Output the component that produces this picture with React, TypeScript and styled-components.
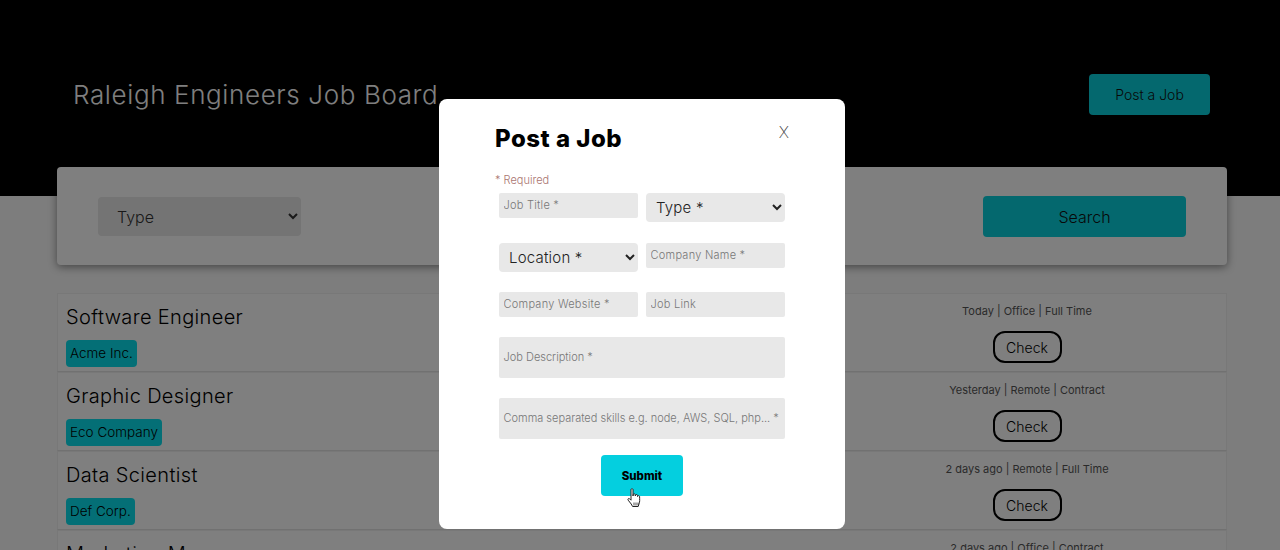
import React from "react";
import styled, { createGlobalStyle } from "styled-components";

const GlobalStyle = createGlobalStyle`
  html, body {
    margin: 0;
    height: 100%;
    overflow: hidden;
    background: #fafafa;
    font-family: "Inter", "Noto Sans", sans-serif;
  }
  * { box-sizing: border-box; }
`;

const Header = styled.header`
  height: 196px;
  background: #000;
  display: flex;
  justify-content: space-between;
  align-items: flex-start;
  padding: 74px 70px 0 73px;
`;

const BoardTitle = styled.h1`
  margin: 0;
  font-size: 26px;
  line-height: 41px;
  font-weight: 300;
  letter-spacing: 0.62px;
  color: #fff;
`;

const PostButton = styled.button`
  width: 121px;
  height: 41px;
  border: 0;
  border-radius: 4px;
  background: #08d0dc;
  color: #111;
  font: 300 14px "Inter", sans-serif;
`;

const Main = styled.main`
  padding: 0 53px 0 57px;
`;

const FilterCard = styled.section`
  height: 98px;
  margin-top: -29px;
  padding: 29px 41px 0;
  display: flex;
  justify-content: space-between;
  background: #fff;
  border-radius: 4px;
  box-shadow: 0 2px 8px rgba(0, 0, 0, 0.45);
`;

const FilterSelect = styled.select`
  width: 203px;
  height: 39px;
  margin-top: 1px;
  padding-left: 15px;
  border: 0;
  border-radius: 4px;
  background: #e8e8e8;
  color: #333;
  font: 300 16px "Inter", sans-serif;
`;

const SearchButton = styled.button`
  width: 203px;
  height: 41px;
  border: 0;
  border-radius: 4px;
  background: #08d0dc;
  color: #111;
  font: 300 16px "Inter", sans-serif;
`;

const JobList = styled.ul`
  list-style: none;
  margin: 28px 0 0;
  padding: 0;
`;

const JobRow = styled.li`
  height: 79px;
  display: flex;
  justify-content: space-between;
  padding: 8px 0 0 8px;
  border: 1px solid #f0f0f0;
  border-bottom-color: #e2e2e2;
  background: #fff;
`;

const JobInfo = styled.div`
  display: flex;
  flex-direction: column;
  align-items: flex-start;
`;

const JobName = styled.h2`
  margin: 0;
  font-size: 20px;
  line-height: 30px;
  font-weight: 300;
  letter-spacing: 0.35px;
  color: #000;
`;

const CompanyTag = styled.span`
  margin-top: 8px;
  height: 27px;
  padding: 0 4px 1px;
  display: flex;
  align-items: center;
  border-radius: 4px;
  background: #08dfec;
  color: #000;
  font-size: 13.5px;
  font-weight: 300;
`;

const JobAside = styled.div`
  width: 398px;
  display: flex;
  flex-direction: column;
  align-items: center;
`;

const JobMeta = styled.p`
  margin: 0;
  height: 21px;
  padding-top: 1px;
  font-size: 11px;
  line-height: 16px;
  color: #555;
`;

const CheckButton = styled.button`
  margin-top: 8px;
  width: 69px;
  height: 32px;
  border: 2px solid #000;
  border-radius: 12px;
  background: transparent;
  color: #000;
  font: 300 14px "Inter", sans-serif;
`;

const Overlay = styled.div`
  position: fixed;
  inset: 0;
  background: rgba(0, 0, 0, 0.5);
`;

const Modal = styled.form`
  position: absolute;
  left: 439px;
  top: 99px;
  width: 406px;
  height: 430px;
  padding: 22px 60px 0;
  background: #fff;
  border-radius: 8px;
`;

const ModalHead = styled.div`
  display: flex;
  justify-content: space-between;
  align-items: flex-start;
`;

const ModalTitle = styled.h2`
  margin: 0 0 0 -4px;
  font-size: 24px;
  line-height: 36px;
  font-weight: 800;
  letter-spacing: 0.5px;
  color: #000;
`;

const CloseMark = styled.span`
  margin: 1px -4px 0 0;
  font-size: 16px;
  line-height: 20px;
  font-weight: 200;
  color: #444;
`;

const RequiredNote = styled.p`
  margin: 16px 0 5px -4px;
  font-size: 11px;
  line-height: 15px;
  font-weight: 300;
  color: #a9746f;
`;

const FieldGrid = styled.div`
  display: grid;
  grid-template-columns: 139px 139px;
  grid-template-rows: 49.5px 49.5px 45px 61px 57px;
  column-gap: 8px;
`;

const FieldCell = styled.div<{ $wide?: boolean }>`
  grid-column: ${(p) => (p.$wide ? "1 / 3" : "auto")};
`;

const TextField = styled.input`
  display: block;
  width: 100%;
  height: 25px;
  padding: 0 4.5px 1px;
  border: 0;
  border-radius: 2px;
  background: #e8e8e8;
  font: 300 11px "Inter", sans-serif;
  letter-spacing: 0.25px;
  &::placeholder { color: #777; opacity: 1; }
`;

const ChoiceField = styled.select`
  display: block;
  width: 100%;
  height: 29px;
  padding-left: 6px;
  border: 0;
  border-radius: 4px;
  background: #e8e8e8;
  color: #222;
  font: 300 15px "Inter", sans-serif;
  letter-spacing: 0.2px;
`;

const AreaField = styled.textarea`
  display: block;
  width: 100%;
  height: 41px;
  padding: 13px 4.5px 0;
  border: 0;
  border-radius: 2px;
  background: #e8e8e8;
  resize: none;
  font: 300 11px "Inter", sans-serif;
  &::placeholder { color: #777; opacity: 1; }
`;

const SubmitRow = styled.div`
  display: flex;
  justify-content: center;
`;

const SubmitButton = styled.button`
  width: 82px;
  height: 41px;
  border: 0;
  border-radius: 4px;
  background: #04cfdf;
  color: #000;
  font: 800 11.5px "Inter", sans-serif;
`;

const HandCursor = styled.svg`
  position: absolute;
  left: 627px;
  top: 488px;
  width: 15px;
  height: 20px;
`;

const jobs = [
  { name: "Software Engineer", company: "Acme Inc.", meta: "Today | Office | Full Time" },
  { name: "Graphic Designer", company: "Eco Company", meta: "Yesterday | Remote | Contract" },
  { name: "Data Scientist", company: "Def Corp.", meta: "2 days ago | Remote | Full Time" },
  { name: "Marketing Manager", company: "Ghi Ltd.", meta: "2 days ago | Office | Contract" },
];

export default function App() {
  return (
    <>
      <GlobalStyle />
      <Header>
        <BoardTitle>Raleigh Engineers Job Board</BoardTitle>
        <PostButton type="button">Post a Job</PostButton>
      </Header>
      <Main>
        <FilterCard>
          <FilterSelect defaultValue="Type">
            <option>Type</option>
          </FilterSelect>
          <SearchButton type="button">Search</SearchButton>
        </FilterCard>
        <JobList>
          {jobs.map((job) => (
            <JobRow key={job.name}>
              <JobInfo>
                <JobName>{job.name}</JobName>
                <CompanyTag>{job.company}</CompanyTag>
              </JobInfo>
              <JobAside>
                <JobMeta>{job.meta}</JobMeta>
                <CheckButton type="button">Check</CheckButton>
              </JobAside>
            </JobRow>
          ))}
        </JobList>
      </Main>
      <Overlay>
        <Modal>
          <ModalHead>
            <ModalTitle>Post a Job</ModalTitle>
            <CloseMark>X</CloseMark>
          </ModalHead>
          <RequiredNote>* Required</RequiredNote>
          <FieldGrid>
            <FieldCell>
              <TextField placeholder="Job Title *" />
            </FieldCell>
            <FieldCell>
              <ChoiceField defaultValue="Type *">
                <option>Type *</option>
              </ChoiceField>
            </FieldCell>
            <FieldCell>
              <ChoiceField defaultValue="Location *">
                <option>Location *</option>
              </ChoiceField>
            </FieldCell>
            <FieldCell>
              <TextField placeholder="Company Name *" />
            </FieldCell>
            <FieldCell>
              <TextField placeholder="Company Website *" />
            </FieldCell>
            <FieldCell>
              <TextField placeholder="Job Link" />
            </FieldCell>
            <FieldCell $wide>
              <AreaField placeholder="Job Description *" />
            </FieldCell>
            <FieldCell $wide>
              <AreaField placeholder="Comma separated skills e.g. node, AWS, SQL, php... *" />
            </FieldCell>
          </FieldGrid>
          <SubmitRow>
            <SubmitButton type="button">Submit</SubmitButton>
          </SubmitRow>
        </Modal>
        <HandCursor viewBox="0 0 15 20">
          <path
            d="M4 1.5c0-1 2-1 2 0V8l.3-1.6c.2-.9 1.8-.8 1.9.2l.1 1.4.3-1c.3-.8 1.7-.6 1.8.3l.1 1.2.4-.6c.5-.6 1.7-.2 1.7.7 0 3 .4 5-.6 7.3l-.8 2.6H5.6L4.2 16 1.2 12.2c-.8-1 .3-2.2 1.3-1.5L4 12.2z"
            fill="#fff"
            stroke="#222"
            strokeWidth="1"
            strokeLinejoin="round"
          />
          <path d="M7 14.5v3M9 14.5v3M11 14.5v3" stroke="#222" strokeWidth="0.8" />
        </HandCursor>
      </Overlay>
    </>
  );
}
